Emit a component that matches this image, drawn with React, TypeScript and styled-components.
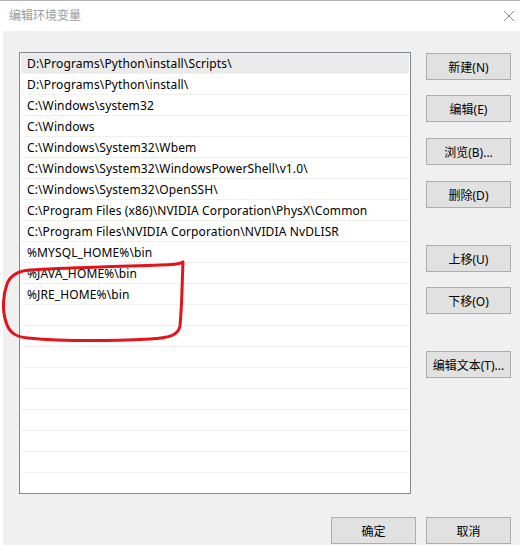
import React from "react";
import styled, { createGlobalStyle } from "styled-components";

const paths = [
  "D:\\Programs\\Python\\install\\Scripts\\",
  "D:\\Programs\\Python\\install\\",
  "C:\\Windows\\system32",
  "C:\\Windows",
  "C:\\Windows\\System32\\Wbem",
  "C:\\Windows\\System32\\WindowsPowerShell\\v1.0\\",
  "C:\\Windows\\System32\\OpenSSH\\",
  "C:\\Program Files (x86)\\NVIDIA Corporation\\PhysX\\Common",
  "C:\\Program Files\\NVIDIA Corporation\\NVIDIA NvDLISR",
  "%MYSQL_HOME%\\bin",
  "%JAVA_HOME%\\bin",
  "%JRE_HOME%\\bin",
];

const ROW_COUNT = 21;

const sideButtons = [
  { label: "新建(N)", gap: 1 },
  { label: "编辑(E)", gap: 15 },
  { label: "浏览(B)...", gap: 16 },
  { label: "删除(D)", gap: 16 },
  { label: "上移(U)", gap: 37 },
  { label: "下移(O)", gap: 15 },
  { label: "编辑文本(T)...", gap: 37 },
];

export default function App() {
  const rows = Array.from({ length: ROW_COUNT }, (_, i) => paths[i] ?? "");
  return (
    <>
      <GlobalStyle />
      <Dialog>
        <TitleBar>
          <Title>编辑环境变量</Title>
          <CloseIcon width="12" height="12" viewBox="0 0 12 12">
            <path d="M1 1 L11 11 M11 1 L1 11" stroke="#8a8a8a" strokeWidth="1" />
          </CloseIcon>
        </TitleBar>
        <Body>
          <Main>
            <PathList>
              {rows.map((text, i) => (
                <PathRow key={i} $selected={i === 0}>
                  {text}
                </PathRow>
              ))}
            </PathList>
            <SideColumn>
              {sideButtons.map((b) => (
                <Button key={b.label} $gap={b.gap}>
                  {b.label}
                </Button>
              ))}
            </SideColumn>
          </Main>
          <Footer>
            <Button>确定</Button>
            <Button>取消</Button>
          </Footer>
        </Body>
        {/* hand-drawn red mark */}
        <Scribble width="520" height="546" viewBox="0 0 520 546">
          <path
            d="M183 262 C178 265 168 265 160 265 C140 266 120 266 100 267 C70 268 45 269 30 270 C18 271 10 276 7 284 C3 295 2 310 6 322 C9 332 15 337 28 338 C60 341 110 341 150 339 C168 338 178 336 180 326 C182 305 182 285 183 262"
            fill="none"
            stroke="#e3131b"
            strokeWidth="3"
            strokeLinecap="round"
            strokeLinejoin="round"
          />
        </Scribble>
      </Dialog>
    </>
  );
}

const GlobalStyle = createGlobalStyle`
  html, body {
    margin: 0;
    padding: 0;
    background: #ffffff;
  }
  body {
    font-family: "Noto Sans", "Noto Sans CJK SC", sans-serif;
  }
`;

const Dialog = styled.div`
  position: relative;
  width: 520px;
  height: 546px;
  background: #ffffff;
  display: flex;
  flex-direction: column;
  overflow: hidden;
`;

const TitleBar = styled.div`
  height: 30px;
  box-sizing: content-box;
  border-top: 1px solid #b4b4b4;
  display: flex;
  align-items: center;
  justify-content: space-between;
  padding: 0 5px 0 9px;
`;

const Title = styled.div`
  font-family: "Noto Sans CJK SC", sans-serif;
  font-size: 12px;
  line-height: 14px;
  color: #9b9b9b;
  margin-top: -3px;
`;

const CloseIcon = styled.svg`
  display: block;
  margin-top: -1px;
`;

const Body = styled.div`
  margin-left: 3px;
  height: 514px;
  background: #f0f0f0;
  display: flex;
  flex-direction: column;
  padding: 21px 9px 0 16px;
  box-sizing: border-box;
`;

const Main = styled.div`
  display: flex;
  gap: 15px;
`;

const PathList = styled.div`
  width: 392px;
  height: 442px;
  box-sizing: border-box;
  background: #ffffff;
  border: 1px solid #828790;
  padding: 0 1px;
  overflow: hidden;
`;

const PathRow = styled.div<{ $selected?: boolean }>`
  height: 21px;
  box-sizing: border-box;
  border-bottom: 1px solid #f0f0f0;
  background: ${(p) => (p.$selected ? "#ebebeb" : "#ffffff")};
  padding: 2px 0 0 6px;
  font-size: 12px;
  line-height: 18px;
  letter-spacing: 0.12px;
  color: #000000;
  white-space: nowrap;
`;

const SideColumn = styled.div`
  display: flex;
  flex-direction: column;
`;

const Button = styled.div<{ $gap?: number }>`
  width: 85px;
  height: 27px;
  margin-top: ${(p) => p.$gap ?? 0}px;
  box-sizing: border-box;
  background: #e1e1e1;
  border: 1px solid #adadad;
  display: flex;
  align-items: center;
  justify-content: center;
  font-family: "Noto Sans", "Noto Sans CJK SC", sans-serif;
  font-size: 12px;
  color: #000000;
`;

const Footer = styled.div`
  display: flex;
  justify-content: flex-end;
  gap: 10px;
  margin-top: 23px;
`;

const Scribble = styled.svg`
  position: absolute;
  left: 0;
  top: 0;
  pointer-events: none;
`;
